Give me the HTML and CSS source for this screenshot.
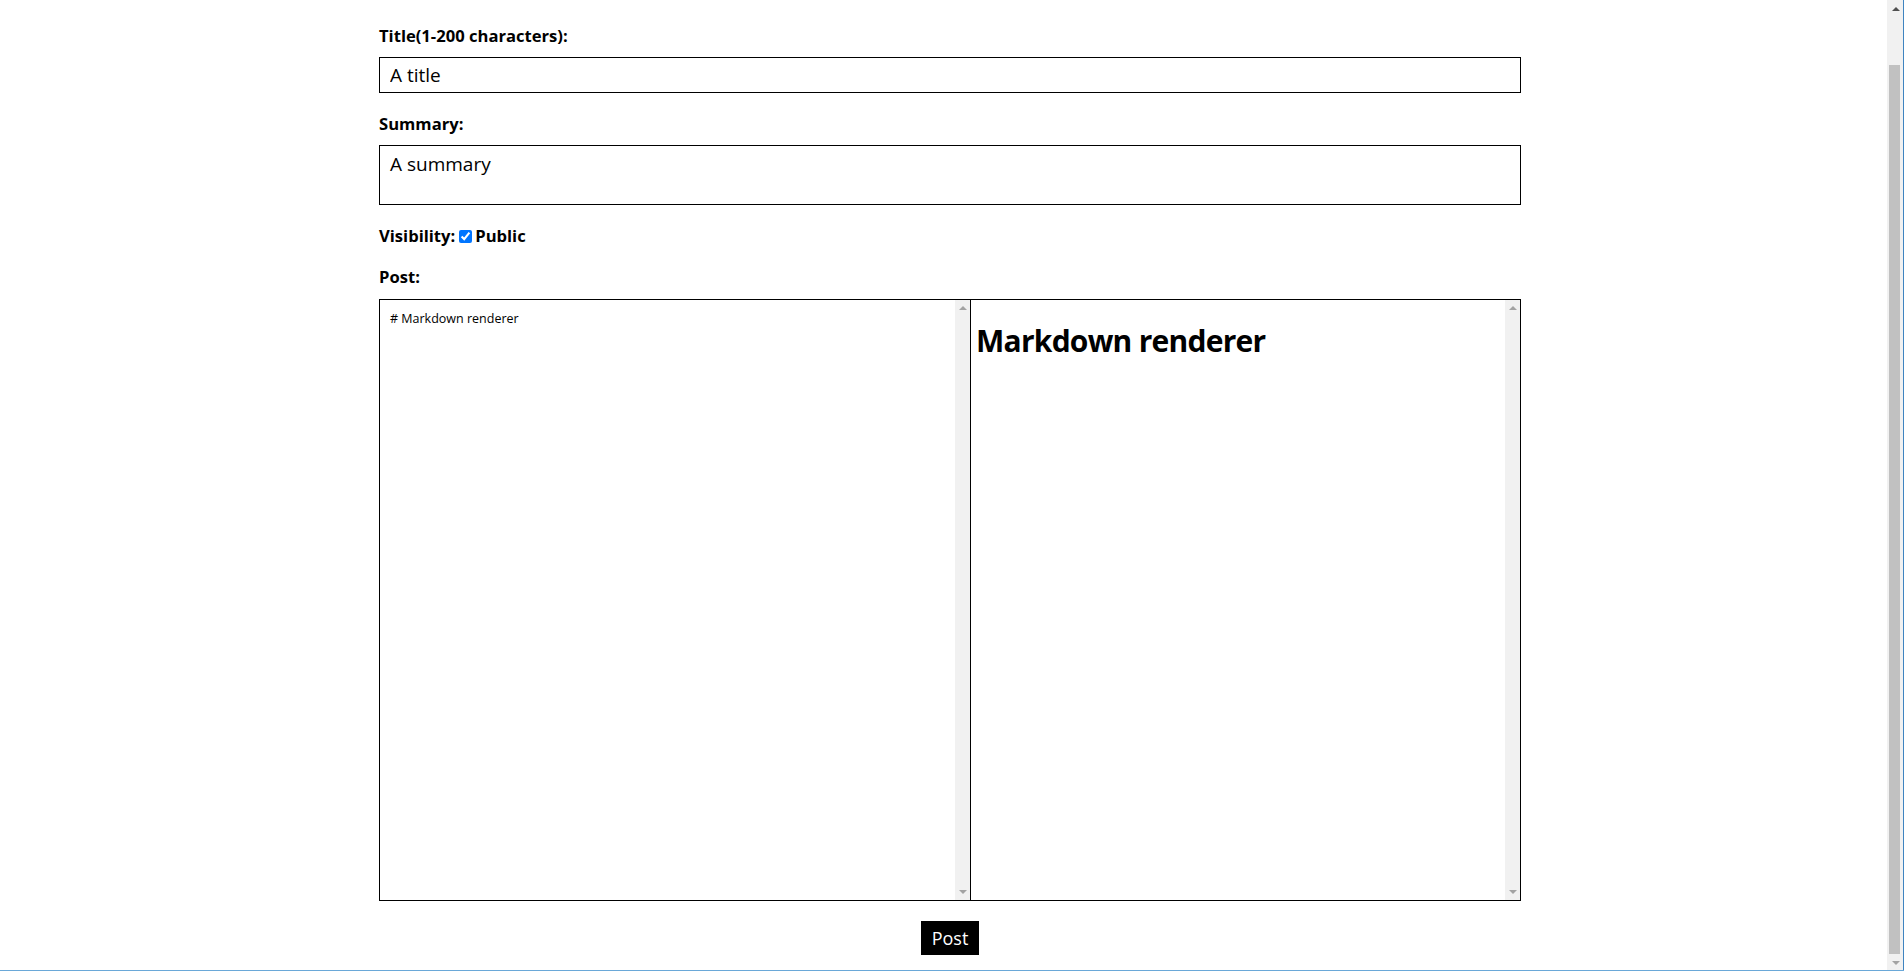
FILE: index.html
```html
<!DOCTYPE html>
<html lang="en">
<head>
<meta charset="utf-8">
<title>New post</title>
<link rel="stylesheet" href="styles.css">
</head>
<body>
<main class="page">
  <form class="post-form">
    <label class="field-label" for="title">Title(1-200 characters):</label>
    <input class="text-input" id="title" type="text" value="A title">
    <label class="field-label gap-top" for="summary">Summary:</label>
    <textarea class="summary" id="summary">A summary</textarea>
    <div class="visibility gap-top">
      <span class="field-label-inline">Visibility:</span>
      <input class="check" type="checkbox" id="public" checked>
      <label class="field-label-inline" for="public">Public</label>
    </div>
    <label class="field-label gap-top post-label" for="source">Post:</label>
    <div class="editor">
      <div class="pane source-pane">
        <textarea class="source" id="source" spellcheck="true"># Markdown renderer</textarea>
        <div class="vscroll" aria-hidden="true"><span class="arrow-up"></span><span class="arrow-down"></span></div>
      </div>
      <div class="pane preview-pane">
        <div class="preview"><h1 class="preview-title">Markdown renderer</h1></div>
        <div class="vscroll" aria-hidden="true"><span class="arrow-up"></span><span class="arrow-down"></span></div>
      </div>
    </div>
    <div class="actions">
      <button class="post-button" type="button">Post</button>
    </div>
  </form>
</main>
<div class="page-scrollbar" aria-hidden="true">
  <div class="sb-button"><span class="sb-arrow-up"></span></div>
  <div class="sb-offset"></div>
  <div class="sb-thumb"></div>
  <div class="sb-button"><span class="sb-arrow-down"></span></div>
</div>
<div class="frame-right" aria-hidden="true"></div>
<div class="frame-bottom" aria-hidden="true"></div>
</body>
</html>
```

FILE: styles.css
```css
html, body {
  margin: 0;
  padding: 0;
  background: #ffffff;
  overflow: hidden;
}
body {
  font-family: "Open Sans", "Noto Sans", sans-serif;
  color: #000;
}
.page {
  padding-top: 26px;
  padding-right: 4px;
  padding-bottom: 16px;
}
.post-form {
  width: 1142px;
  margin: 0 auto;
  display: flex;
  flex-direction: column;
}
.field-label {
  display: block;
  font-weight: 700;
  font-size: 16.6px;
  line-height: 20px;
  margin-bottom: 11px;
}
.gap-top {
  margin-top: 21px;
}
.text-input {
  box-sizing: border-box;
  height: 36px;
  margin: 0;
  border: 1px solid #000;
  border-radius: 0;
  padding: 0 10px;
  font-family: inherit;
  font-size: 19px;
  color: #000;
  outline: none;
}
.summary {
  box-sizing: border-box;
  height: 60px;
  margin: 0;
  border: 1px solid #000;
  border-radius: 0;
  padding: 6px 10px;
  font-family: inherit;
  font-size: 19px;
  line-height: 24px;
  color: #000;
  resize: none;
  outline: none;
}
.visibility {
  display: flex;
  align-items: center;
  height: 20px;
}
.field-label-inline {
  font-weight: 700;
  font-size: 16.6px;
  line-height: 20px;
}
.check {
  width: 13px;
  height: 13px;
  margin: 0 3px 0 4px;
}
.post-label {
  margin-bottom: 12px;
}
.editor {
  display: flex;
  height: 602px;
}
.pane {
  box-sizing: border-box;
  display: flex;
  height: 100%;
  border: 1px solid #000;
}
.source-pane {
  width: 592px;
}
.preview-pane {
  flex: 1;
  border-left: none;
}
.source {
  flex: 1;
  box-sizing: border-box;
  height: 100%;
  margin: 0;
  border: none;
  border-radius: 0;
  padding: 10px 10px;
  font-family: inherit;
  font-size: 12.5px;
  line-height: 18px;
  color: #000;
  resize: none;
  outline: none;
  overflow: hidden;
}
.preview {
  flex: 1;
  padding: 0 5px;
  overflow: hidden;
}
.preview-title {
  font-size: 30px;
  font-weight: 700;
  line-height: 40px;
  letter-spacing: -0.75px;
  margin: 21px 0;
}
.vscroll {
  width: 15px;
  background: #f1f1f1;
  display: flex;
  flex-direction: column;
  justify-content: space-between;
  align-items: center;
  padding: 6px 0;
  box-sizing: border-box;
}
.arrow-up {
  width: 0;
  height: 0;
  border-left: 4px solid transparent;
  border-right: 4px solid transparent;
  border-bottom: 4px solid #a3a3a3;
}
.arrow-down {
  width: 0;
  height: 0;
  border-left: 4px solid transparent;
  border-right: 4px solid transparent;
  border-top: 4px solid #a3a3a3;
}
.actions {
  display: flex;
  justify-content: center;
  margin-top: 20px;
}
.post-button {
  height: 34px;
  padding: 0 11px;
  border: none;
  border-radius: 0;
  background: #000;
  color: #fff;
  font-family: inherit;
  font-size: 18px;
}
.page-scrollbar {
  position: fixed;
  top: 0;
  right: 0;
  width: 17px;
  height: 100%;
  background: #f1f1f1;
  display: flex;
  flex-direction: column;
}
.sb-button {
  height: 17px;
  display: flex;
  align-items: center;
  justify-content: center;
  flex: none;
}
.sb-arrow-up {
  width: 0;
  height: 0;
  border-left: 4px solid transparent;
  border-right: 4px solid transparent;
  border-bottom: 4px solid #505050;
}
.sb-arrow-down {
  width: 0;
  height: 0;
  border-left: 4px solid transparent;
  border-right: 4px solid transparent;
  border-top: 4px solid #a3a3a3;
}
.sb-offset {
  height: 48px;
  flex: none;
}
.sb-thumb {
  flex: 1;
  margin: 0 4px 0 2px;
  background: #c1c1c1;
}
.frame-right {
  position: fixed;
  top: 0;
  right: 0;
  width: 1px;
  height: 100%;
  background: #3f84c0;
}
.frame-bottom {
  position: fixed;
  left: 0;
  bottom: 0;
  width: 100%;
  height: 1px;
  background: #6aa8d8;
}
```
